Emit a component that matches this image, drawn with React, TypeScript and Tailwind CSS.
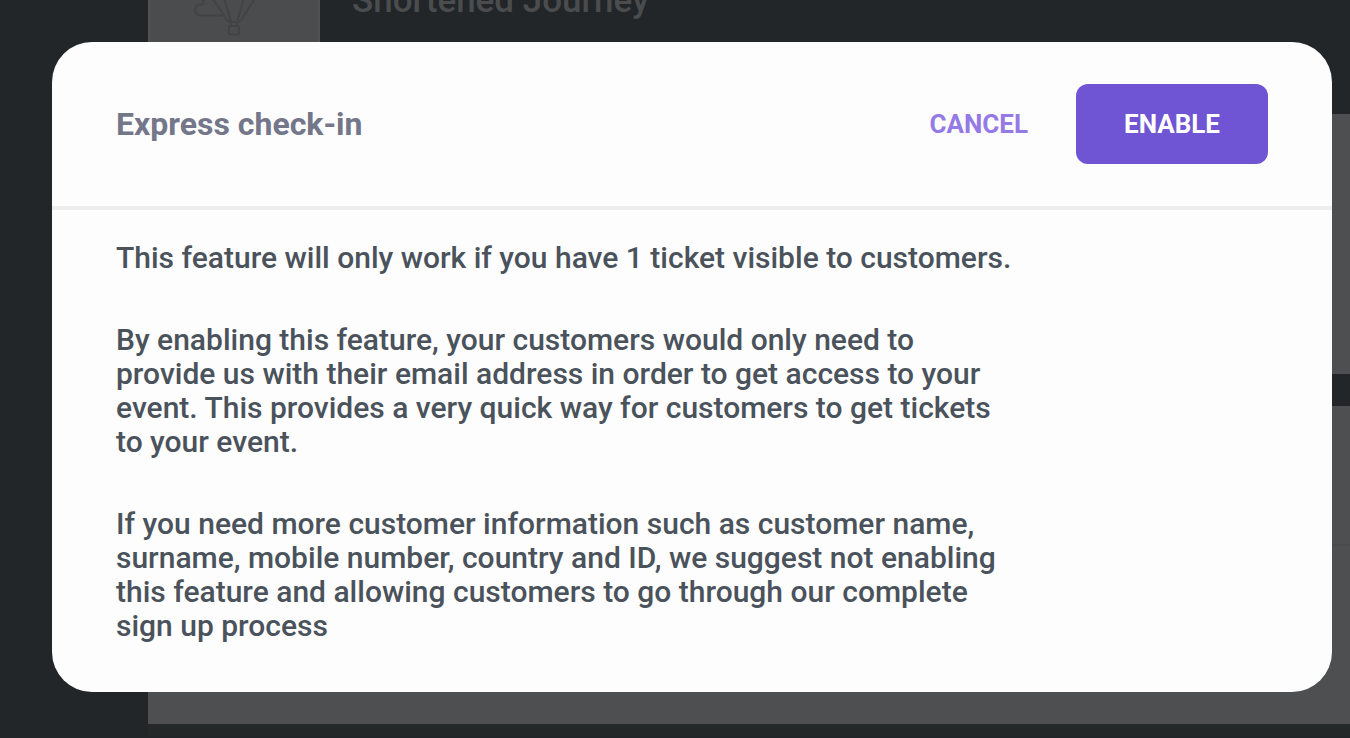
import React, { useState } from "react";

interface ModalProps {
  title: string;
  onCancel: () => void;
  onEnable: () => void;
  children: React.ReactNode;
}

const BalloonIcon: React.FC = () => (
  <svg
    width="100"
    height="38"
    viewBox="0 0 100 38"
    fill="none"
    stroke="#424345"
    strokeWidth="2"
    strokeLinejoin="round"
    aria-hidden="true">
    <path d="M40 15.500H17a5.500 5.500 0 0 1-1-11h3c0-5 3-8 7-9" />
    <path d="M23-10 38 12q4 8 7 10h10q3-2 7-10L77-10" />
    <path d="M39-6 47 22v4M61-6 53 22v4" />
    <rect x="45" y="26" width="10" height="8.500" rx="1.500" />
  </svg>
);

const Modal: React.FC<ModalProps> = ({ title, onCancel, onEnable, children }) => (
  <div className="fixed inset-0 flex items-start pt-[42px] pr-[18px] pl-[52px]">
    <div
      role="dialog"
      aria-modal="true"
      aria-labelledby="modal-title"
      className="w-full rounded-[40px] bg-[#fdfdfd]">
      <header className="flex items-center justify-between border-b-4 border-[#eeeeee] px-16 py-[42px]">
        <h2 id="modal-title" className="text-[32px] leading-[34px] font-bold text-[#74768a]">
          {title}
        </h2>
        <div className="flex items-center gap-12">
          <button
            type="button"
            onClick={onCancel}
            className="cursor-pointer text-[26px] leading-[34px] font-bold text-[#957ae6]">
            CANCEL
          </button>
          <button
            type="button"
            onClick={onEnable}
            className="h-20 w-48 cursor-pointer rounded-xl bg-[#6f55d3] text-[26px] leading-[34px] font-bold text-white">
            ENABLE
          </button>
        </div>
      </header>
      <div className="flex max-w-[1028px] flex-col gap-12 px-16 pt-[31px] pb-[49px] text-[30px] leading-[34px] font-medium text-[#4a525b]">
        {children}
      </div>
    </div>
  </div>
);

const App: React.FC = () => {
  const [open, setOpen] = useState(true);
  const close = () => setOpen(false);

  return (
    <div className="min-h-screen bg-[#222629] font-['Roboto',sans-serif]">
      <main className="pl-[148px]">
        <div className="flex h-[82px] items-start gap-8 overflow-hidden">
          <div className="flex h-full w-[172px] justify-center border-x-2 border-[#505153] bg-[#4b4c4e]">
            <BalloonIcon />
          </div>
          <h1 className="-mt-4 text-[35px] leading-[34px] font-medium text-[#4b4c4e]">
            Shortened Journey
          </h1>
        </div>
        <section className="mt-8 h-[260px] bg-[#4e4f51]" />
        <section className="mt-8 h-[318px] bg-[#4e4f51]">
          <div className="h-[140px] border-b-2 border-[#4a4a4c]" />
        </section>
        <div className="h-3 bg-[#242828]" />
      </main>

      {open && (
        <Modal title="Express check-in" onCancel={close} onEnable={close}>
          <p>This feature will only work if you have 1 ticket visible to customers.</p>
          <p>
            By enabling this feature, your customers would only need to provide us with their email
            address in order to get access to your event. This provides a very quick way for
            customers to get tickets to your event.
          </p>
          <p>
            If you need more customer information such as customer name, surname, mobile number,
            country and ID, we suggest not enabling this feature and allowing customers to go
            through our complete sign up process
          </p>
        </Modal>
      )}
    </div>
  );
};

export default App;
